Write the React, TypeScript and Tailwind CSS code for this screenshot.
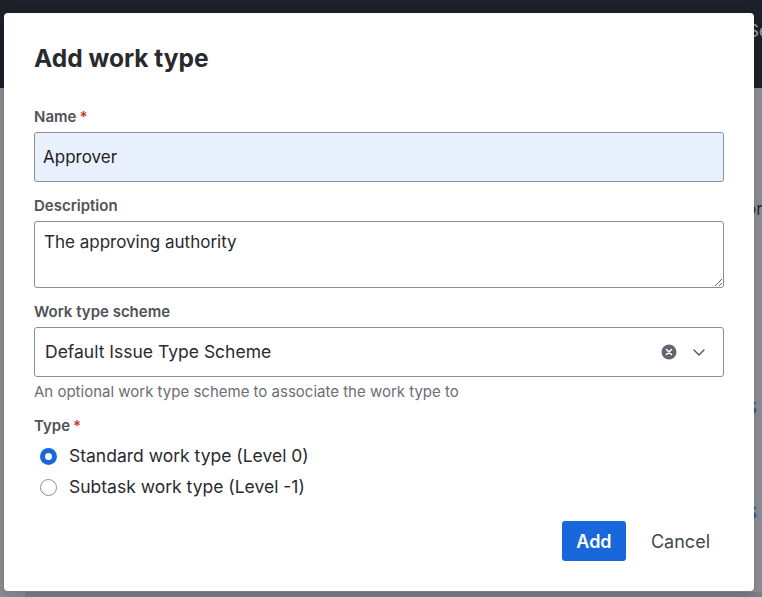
import React from "react";

function Label({ text, required }: { text: string; required?: boolean }) {
  return (
    <div className="h-[20px] leading-[20px] text-[15px] font-semibold text-[#505258]">
      {text}
      {required && <span className="ml-[3px] text-[#c9372c]">*</span>}
    </div>
  );
}

function Radio({ checked, label }: { checked?: boolean; label: string }) {
  return (
    <label className="flex h-[31px] items-center">
      <span className="ml-[6px] flex w-[17px] h-[17px] items-center justify-center">
        {checked ? (
          <span className="flex w-[17px] h-[17px] items-center justify-center rounded-full bg-[#1868db]">
            <span className="w-[7px] h-[7px] rounded-full bg-white" />
          </span>
        ) : (
          <span className="w-[17px] h-[17px] rounded-full border border-[#8c8f97] bg-white" />
        )}
      </span>
      <span className="ml-[12px] text-[17.5px] text-[#292a2e]">{label}</span>
    </label>
  );
}

export default function App() {
  return (
    <div
      className="relative w-[762px] h-[597px] overflow-hidden bg-[#8a8d93]"
      style={{ fontFamily: "Inter, 'Noto Sans', sans-serif" }}
    >
      {/* background page */}
      <div className="h-[88px] bg-[#1c2029] pl-[748px] pt-[19px] text-[17px] text-[#9ea2a8] whitespace-nowrap">
        Se
      </div>
      <div className="pl-[746px] whitespace-nowrap">
        <div className="pt-[109px] text-[17px] text-[#2a2c31]">or</div>
        <div className="pt-[173px] text-[17px] text-[#1d4c94]">S</div>
        <div className="pt-[80px] text-[17px] text-[#1d4c94]">S</div>
      </div>
      <div className="absolute left-[25px] right-0 bottom-0 h-[5px] bg-[#7b7e85]" />

      {/* dialog */}
      <div className="absolute left-[4px] top-[13px] w-[750px] h-[578px] rounded-[4px] bg-white px-[30px] pt-[31px] shadow-[0_4px_12px_rgba(0,0,0,0.15)]">
        <h1 className="h-[28px] leading-[28px] text-[24.5px] font-bold text-[#292a2e]">
          Add work type
        </h1>

        <div className="mt-[35px]">
          <Label text="Name" required />
          <input
            defaultValue="Approver"
            className="mt-[5px] block w-full h-[50px] rounded-[3px] border border-[#8c8f97] bg-[#e9f0fd] px-[8px] text-[17px] text-[#1f2023] outline-none"
          />
        </div>

        <div className="mt-[14px]">
          <Label text="Description" />
          <textarea
            defaultValue="The approving authority"
            className="mt-[5px] block w-full h-[67px] rounded-[3px] border border-[#8c8f97] bg-white px-[9px] pt-[8px] text-[17px] leading-[24px] text-[#292a2e] outline-none resize-y"
          />
        </div>

        <div className="mt-[14px]">
          <Label text="Work type scheme" />
          <div className="mt-[5px] flex h-[50px] items-center rounded-[3px] border border-[#8c8f97] bg-white pl-[10px] pr-[16px]">
            <span className="flex-1 text-[17.5px] text-[#292a2e]">Default Issue Type Scheme</span>
            <svg width="16" height="16" viewBox="0 0 16 16" className="mr-[14px]">
              <circle cx="8" cy="8" r="7.5" fill="#626670" />
              <path d="M5.5 5.5 L10.5 10.5 M10.5 5.5 L5.5 10.5" stroke="#fff" strokeWidth="1.6" strokeLinecap="round" />
            </svg>
            <svg width="16" height="16" viewBox="0 0 16 16">
              <path d="M3 6 L8 11 L13 6" fill="none" stroke="#505258" strokeWidth="1.4" strokeLinecap="round" strokeLinejoin="round" />
            </svg>
          </div>
          <div className="mt-[5px] h-[20px] leading-[20px] text-[15px] text-[#6b6e76]">
            An optional work type scheme to associate the work type to
          </div>
        </div>

        <div className="mt-[14px]">
          <Label text="Type" required />
          <div className="mt-[5px]">
            <Radio checked label="Standard work type (Level 0)" />
            <Radio label="Subtask work type (Level -1)" />
          </div>
        </div>

        <div className="mt-[18px] flex justify-end pr-[14px]">
          <button className="h-[40px] w-[64px] rounded-[3px] bg-[#1868db] text-[18px] font-semibold text-white">
            Add
          </button>
          <button className="ml-[25px] h-[40px] text-[18px] text-[#44464c]">Cancel</button>
        </div>
      </div>
    </div>
  );
}
